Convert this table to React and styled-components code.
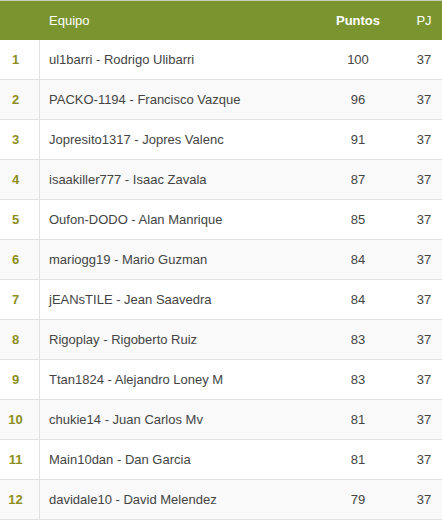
import styled, {createGlobalStyle} from "styled-components"

const Global = createGlobalStyle`
  body {
    margin: 0;
    background: #fff;
    font-family: "Liberation Sans", Arial, sans-serif;
  }
`

const rows = [
  ["ul1barri - Rodrigo Ulibarri", 100, 37],
  ["PACKO-1194 - Francisco Vazque", 96, 37],
  ["Jopresito1317 - Jopres Valenc", 91, 37],
  ["isaakiller777 - Isaac Zavala", 87, 37],
  ["Oufon-DODO - Alan Manrique", 85, 37],
  ["mariogg19 - Mario Guzman", 84, 37],
  ["jEANsTILE - Jean Saavedra", 84, 37],
  ["Rigoplay - Rigoberto Ruiz", 83, 37],
  ["Ttan1824 - Alejandro Loney M", 83, 37],
  ["chukie14 - Juan Carlos Mv", 81, 37],
  ["Main10dan - Dan Garcia", 81, 37],
  ["davidale10 - David Melendez", 79, 37],
]

const Table = styled.div`
  width: 442px;
  font-size: 13px;
`

const Row = styled.div`
  display: grid;
  grid-template-columns: 40px 1fr 96px 36px;
  height: 40px;
  box-sizing: border-box;
`

const Head = styled(Row)`
  background: #7a952f;
  color: #fff;
  border-top: 1px solid #c9cfc0;
`

const HeadCell = styled.div`
  display: flex;
  align-items: center;
  justify-content: ${p => (p.center ? "center" : "flex-start")};
  padding-left: ${p => (p.center ? 0 : 9)}px;
  font-weight: ${p => (p.bold ? "bold" : "normal")};
  padding-bottom: 1px;
`

const BodyRow = styled(Row)`
  background: ${p => (p.even ? "#f9f9f9" : "#fff")};
  border-bottom: 1px solid #e2e2e2;
  color: #444;
`

const Pos = styled.div`
  display: flex;
  align-items: center;
  justify-content: center;
  padding-right: 8px;
  border-right: 1px solid #e2e2e2;
  color: #8c8f1c;
  font-weight: bold;
`

const Team = styled.div`
  display: flex;
  align-items: center;
  padding-left: 9px;
  white-space: nowrap;
`

const Num = styled.div`
  display: flex;
  align-items: center;
  justify-content: center;
`

export default function App() {
  return (
    <>
      <Global />
      <Table>
        <Head>
          <HeadCell />
          <HeadCell>Equipo</HeadCell>
          <HeadCell center bold>Puntos</HeadCell>
          <HeadCell center>PJ</HeadCell>
        </Head>
        {rows.map(([team, pts, pj], i) => (
          <BodyRow key={i} even={i % 2 === 1}>
            <Pos>{i + 1}</Pos>
            <Team>{team}</Team>
            <Num>{pts}</Num>
            <Num>{pj}</Num>
          </BodyRow>
        ))}
      </Table>
    </>
  )
}
